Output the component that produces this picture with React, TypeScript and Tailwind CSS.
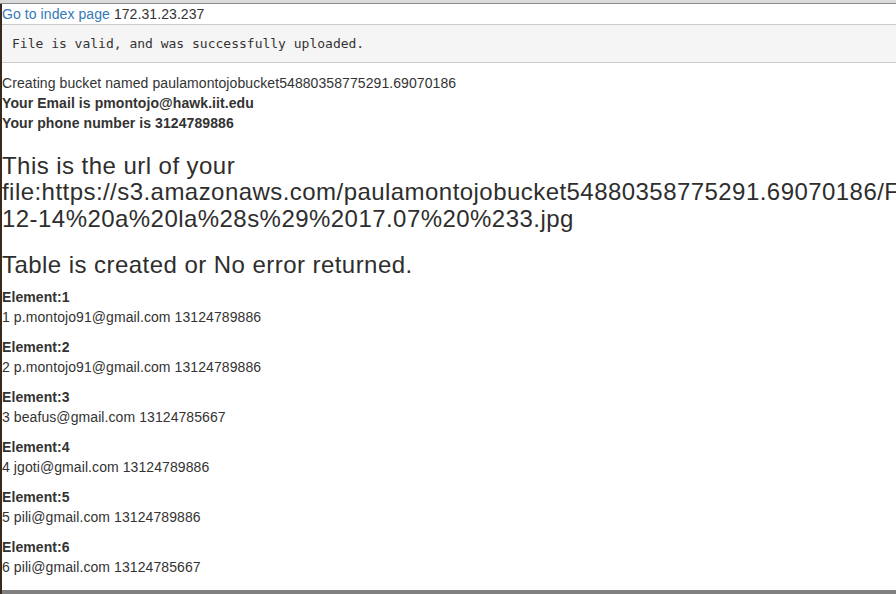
const elements = [
  { id: 1, email: 'p.montojo91@gmail.com', phone: '13124789886' },
  { id: 2, email: 'p.montojo91@gmail.com', phone: '13124789886' },
  { id: 3, email: 'beafus@gmail.com', phone: '13124785667' },
  { id: 4, email: 'jgoti@gmail.com', phone: '13124789886' },
  { id: 5, email: 'pili@gmail.com', phone: '13124789886' },
  { id: 6, email: 'pili@gmail.com', phone: '13124785667' },
  { id: 7, email: 'pili@gmail.com', phone: '13124789886' },
]

export default function App() {
  return (
    <div className="w-[896px] h-[594px] overflow-hidden flex flex-col bg-white font-['Liberation_Sans',Arial,sans-serif]">
      {/* window chrome edge */}
      <div className="h-[4px] shrink-0 bg-[#dadada] border-b border-[#8a8a8a]" />

      <div className="flex flex-1 min-h-0">
        <div className="w-[2px] shrink-0 bg-[#3a2a1e]" />

        <div className="flex-1 min-w-0 flex flex-col">
          <div className="flex-1 min-h-0 overflow-hidden text-[14px] leading-[20px] tracking-[0.08px] text-[#333]">
            <div>
              <a href="#" className="text-[#337ab7]">Go to index page</a> 172.31.23.237
            </div>

            <pre className="mb-[10px] px-[10px] py-[9px] border-y border-[#cccccc] bg-[#f5f5f5] text-[13px] leading-[19px] tracking-normal text-[#333] font-['DejaVu_Sans_Mono',monospace]">
              File is valid, and was successfully uploaded.
            </pre>

            <div>Creating bucket named paulamontojobucket54880358775291.69070186</div>
            <div className="font-bold">Your Email is pmontojo@hawk.iit.edu</div>
            <div className="font-bold">Your phone number is 3124789886</div>

            <h3 className="mt-[20px] mb-[10px] text-[24px] leading-[1.1] font-normal tracking-[0.45px] text-[#2e2e2e] whitespace-nowrap">
              This is the url of your
              <br />
              file:https://s3.amazonaws.com/paulamontojobucket54880358775291.69070186/Foto%20el%202015-
              <br />
              12-14%20a%20la%28s%29%2017.07%20%233.jpg
            </h3>

            <h3 className="mt-[20px] mb-[8px] text-[24px] leading-[1.1] font-normal tracking-[0.45px] text-[#2e2e2e]">
              Table is created or No error returned.
            </h3>

            {elements.map((el) => (
              <p key={el.id} className="mb-[10px]">
                <b>Element:{el.id}</b>
                <br />
                {el.id} {el.email} {el.phone}
              </p>
            ))}
          </div>

          <div className="h-[4px] shrink-0 bg-[#808080]" />
        </div>
      </div>
    </div>
  )
}
